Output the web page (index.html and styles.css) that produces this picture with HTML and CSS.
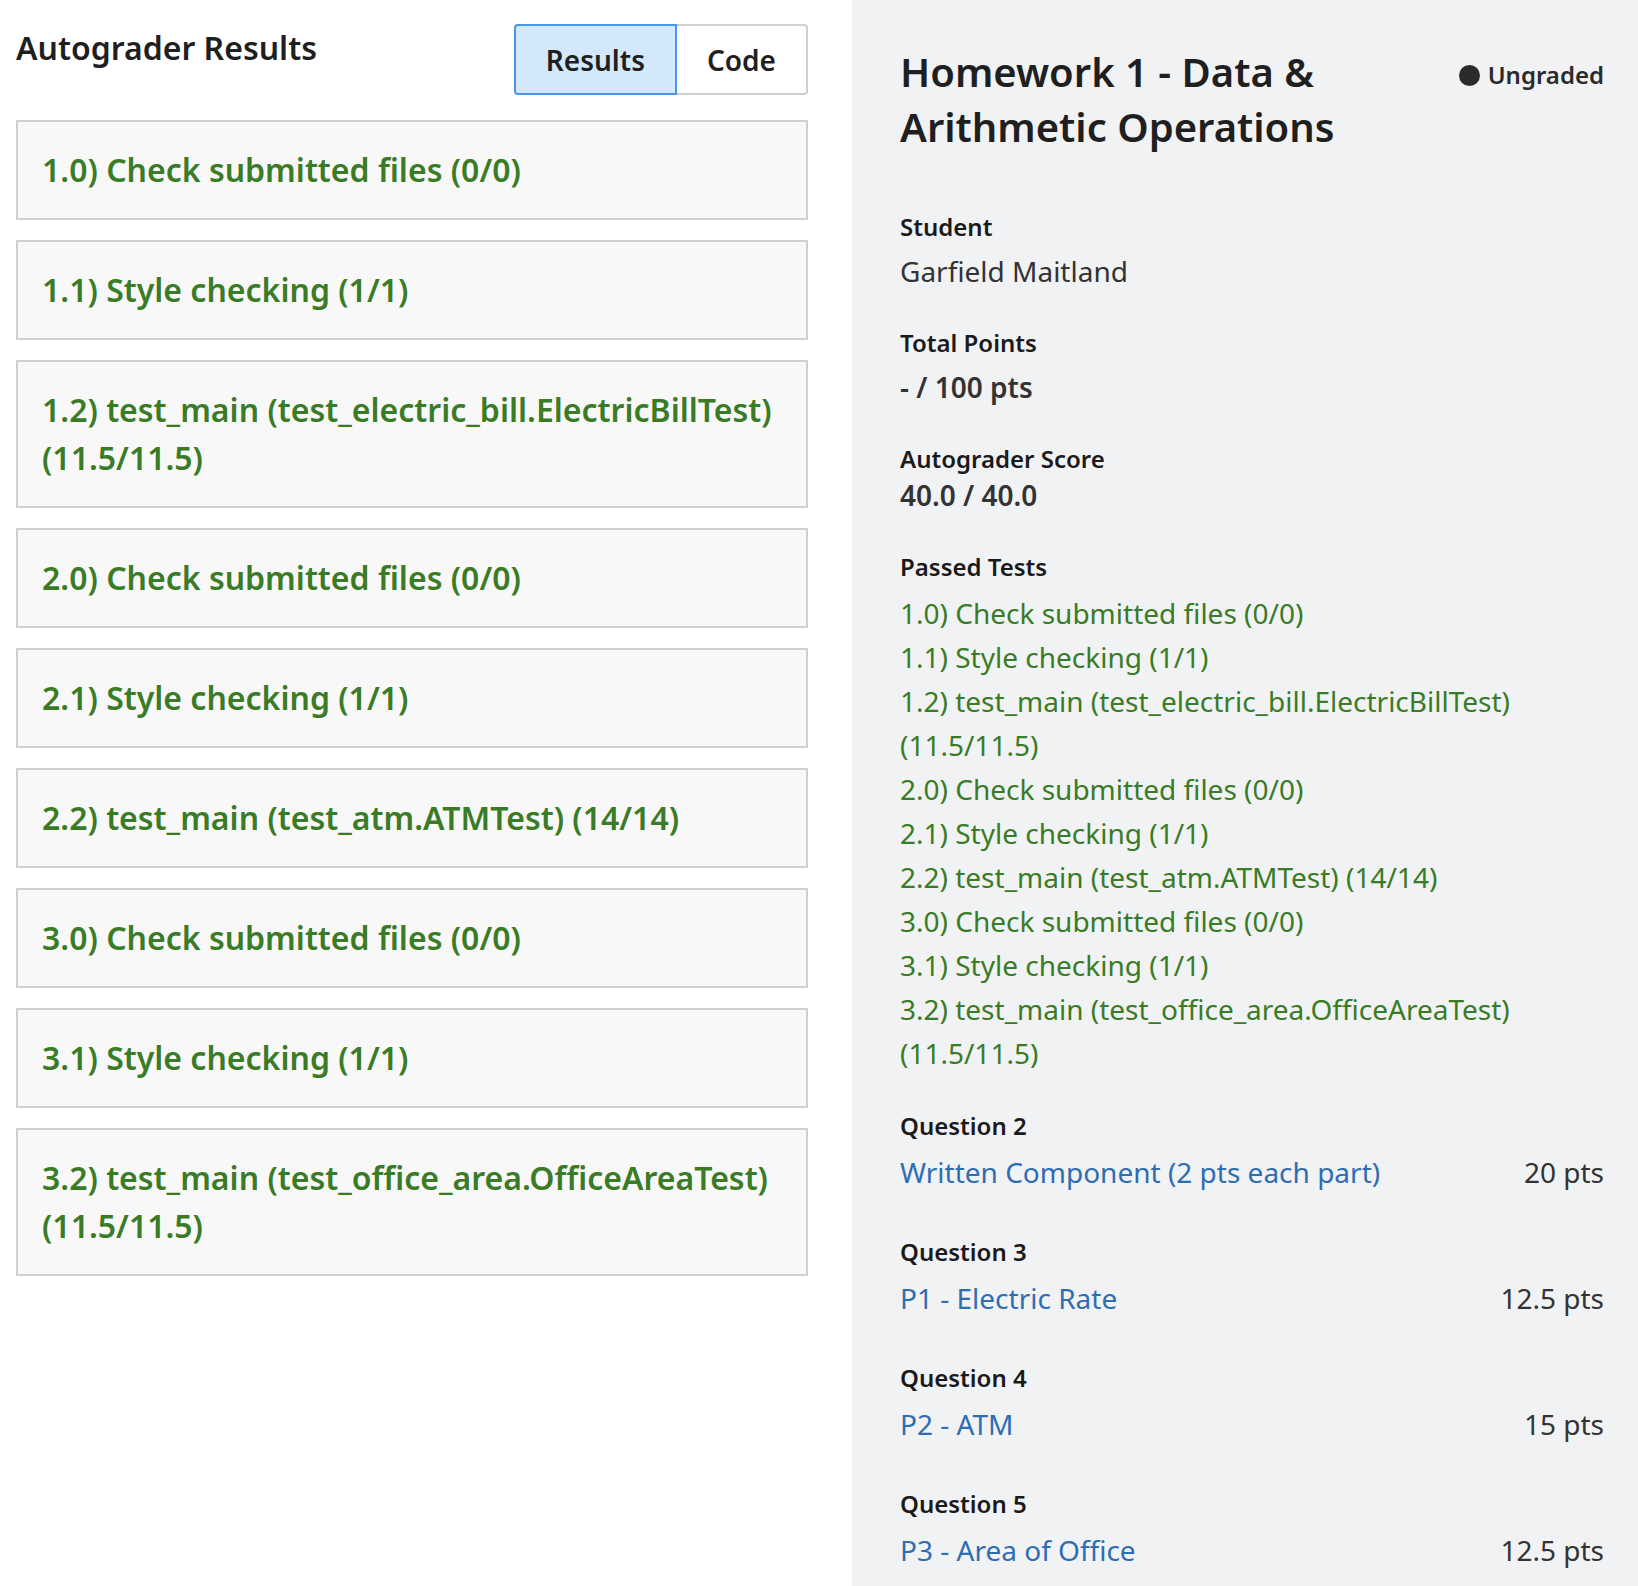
FILE: index.html
```html
<!DOCTYPE html>
<html lang="en">
<head>
<meta charset="utf-8">
<title>Autograder Results</title>
<link rel="stylesheet" href="styles.css">
</head>
<body>
<div class="page">
  <main class="results">
    <div class="results-header">
      <h2 class="results-title">Autograder Results</h2>
      <div class="toggle">
        <button class="toggle-btn toggle-btn--active">Results</button>
        <button class="toggle-btn toggle-btn--code">Code</button>
      </div>
    </div>
    <div class="test-card">1.0) Check submitted files (0/0)</div>
    <div class="test-card">1.1) Style checking (1/1)</div>
    <div class="test-card">1.2) test_main (test_electric_bill.ElectricBillTest) (11.5/11.5)</div>
    <div class="test-card">2.0) Check submitted files (0/0)</div>
    <div class="test-card">2.1) Style checking (1/1)</div>
    <div class="test-card">2.2) test_main (test_atm.ATMTest) (14/14)</div>
    <div class="test-card">3.0) Check submitted files (0/0)</div>
    <div class="test-card">3.1) Style checking (1/1)</div>
    <div class="test-card">3.2) test_main (test_office_area.OfficeAreaTest) (11.5/11.5)</div>
  </main>
  <aside class="sidebar">
    <div class="sidebar-header">
      <h1 class="assignment-title">Homework 1 - Data &amp; Arithmetic Operations</h1>
      <div class="status"><span class="status-dot"></span>Ungraded</div>
    </div>

    <section class="info info--first">
      <div class="info-label">Student</div>
      <div class="info-value">Garfield Maitland</div>
    </section>

    <section class="info">
      <div class="info-label">Total Points</div>
      <div class="info-value info-value--strong">- / 100 pts</div>
    </section>

    <section class="info">
      <div class="info-label">Autograder Score</div>
      <div class="info-value info-value--score">40.0 / 40.0</div>
    </section>

    <section class="info info--tests">
      <div class="info-label">Passed Tests</div>
      <ul class="test-list">
        <li>1.0) Check submitted files (0/0)</li>
        <li>1.1) Style checking (1/1)</li>
        <li>1.2) test_main (test_electric_bill.ElectricBillTest) (11.5/11.5)</li>
        <li>2.0) Check submitted files (0/0)</li>
        <li>2.1) Style checking (1/1)</li>
        <li>2.2) test_main (test_atm.ATMTest) (14/14)</li>
        <li>3.0) Check submitted files (0/0)</li>
        <li>3.1) Style checking (1/1)</li>
        <li>3.2) test_main (test_office_area.OfficeAreaTest) (11.5/11.5)</li>
      </ul>
    </section>

    <section class="question question--first">
      <div class="info-label">Question 2</div>
      <div class="question-row"><a class="question-link" href="#">Written Component (2 pts each part)</a><span class="question-pts">20 pts</span></div>
    </section>
    <section class="question">
      <div class="info-label">Question 3</div>
      <div class="question-row"><a class="question-link" href="#">P1 - Electric Rate</a><span class="question-pts">12.5 pts</span></div>
    </section>
    <section class="question">
      <div class="info-label">Question 4</div>
      <div class="question-row"><a class="question-link" href="#">P2 - ATM</a><span class="question-pts">15 pts</span></div>
    </section>
    <section class="question">
      <div class="info-label">Question 5</div>
      <div class="question-row"><a class="question-link" href="#">P3 - Area of Office</a><span class="question-pts">12.5 pts</span></div>
    </section>
  </aside>
</div>
</body>
</html>
```

FILE: styles.css
```css
* { box-sizing: border-box; }

html, body {
  margin: 0;
  padding: 0;
}

body {
  font-family: "Noto Sans", "Open Sans", "Liberation Sans", sans-serif;
  color: #333;
  background: #fff;
}

.page {
  display: flex;
  min-height: 100vh;
}

/* Left: autograder results */
.results {
  width: 852px;
  flex: 0 0 852px;
  padding: 24px 44px 24px 16px;
  background: #fff;
}

.results-header {
  display: flex;
  justify-content: space-between;
  align-items: flex-start;
  margin-bottom: 25px;
}

.results-title {
  margin: 0;
  font-size: 32px;
  line-height: 48px;
  font-weight: 600;
  color: #1f1f1f;
}

.toggle {
  display: flex;
}

.toggle-btn {
  height: 71px;
  padding: 0 30px;
  font-family: inherit;
  font-size: 28px;
  font-weight: 600;
  color: #1f1f1f;
  background: #fff;
  border: 2px solid #cfcfcf;
  border-radius: 4px;
  cursor: pointer;
}

.toggle-btn--active {
  background: #d3e8fb;
  border-color: #4a97e6;
  border-top-right-radius: 0;
  border-bottom-right-radius: 0;
}

.toggle-btn--code {
  border-left: 0;
  border-top-left-radius: 0;
  border-bottom-left-radius: 0;
}

.test-card {
  margin-bottom: 20px;
  padding: 24px;
  border: 2px solid #d0d0d0;
  background: #f8f8f8;
  font-size: 32px;
  line-height: 48px;
  font-weight: 600;
  color: #3a7b26;
}

/* Right: sidebar */
.sidebar {
  flex: 1 1 auto;
  padding: 44px 34px 24px 48px;
  background: #f1f2f4;
}

.sidebar-header {
  display: flex;
  justify-content: space-between;
  align-items: flex-start;
  gap: 24px;
}

.assignment-title {
  margin: 0;
  font-size: 40px;
  line-height: 55px;
  font-weight: 600;
  color: #1f1f1f;
}

.status {
  display: flex;
  align-items: center;
  gap: 8px;
  margin-top: 13px;
  white-space: nowrap;
  font-size: 24px;
  line-height: 36px;
  font-weight: 600;
  color: #2b2b2b;
}

.status-dot {
  width: 21px;
  height: 21px;
  border-radius: 50%;
  background: #2b2b2b;
}

.info {
  margin-top: 32px;
}

.info--first {
  margin-top: 55px;
}

.info--tests {
  margin-top: 36px;
}

.info-label {
  font-size: 24px;
  line-height: 36px;
  font-weight: 600;
  color: #1a1a1a;
}

.info-value {
  margin-top: 4px;
  font-size: 28px;
  line-height: 44px;
  color: #333;
}

.info-value--strong {
  font-weight: 600;
}

.info-value--score {
  margin-top: 0;
  line-height: 36px;
  font-weight: 600;
}

.test-list {
  list-style: none;
  margin: 6px 0 0;
  padding: 0;
  font-size: 28px;
  line-height: 44px;
  color: #3a7b26;
}

.question {
  margin-top: 40px;
}

.question--first {
  margin-top: 33px;
}

.question-row {
  display: flex;
  justify-content: space-between;
  align-items: baseline;
  margin-top: 6px;
  font-size: 28px;
  line-height: 44px;
}

.question-link {
  color: #2f6db3;
  text-decoration: none;
}

.question-pts {
  color: #333;
}
```
